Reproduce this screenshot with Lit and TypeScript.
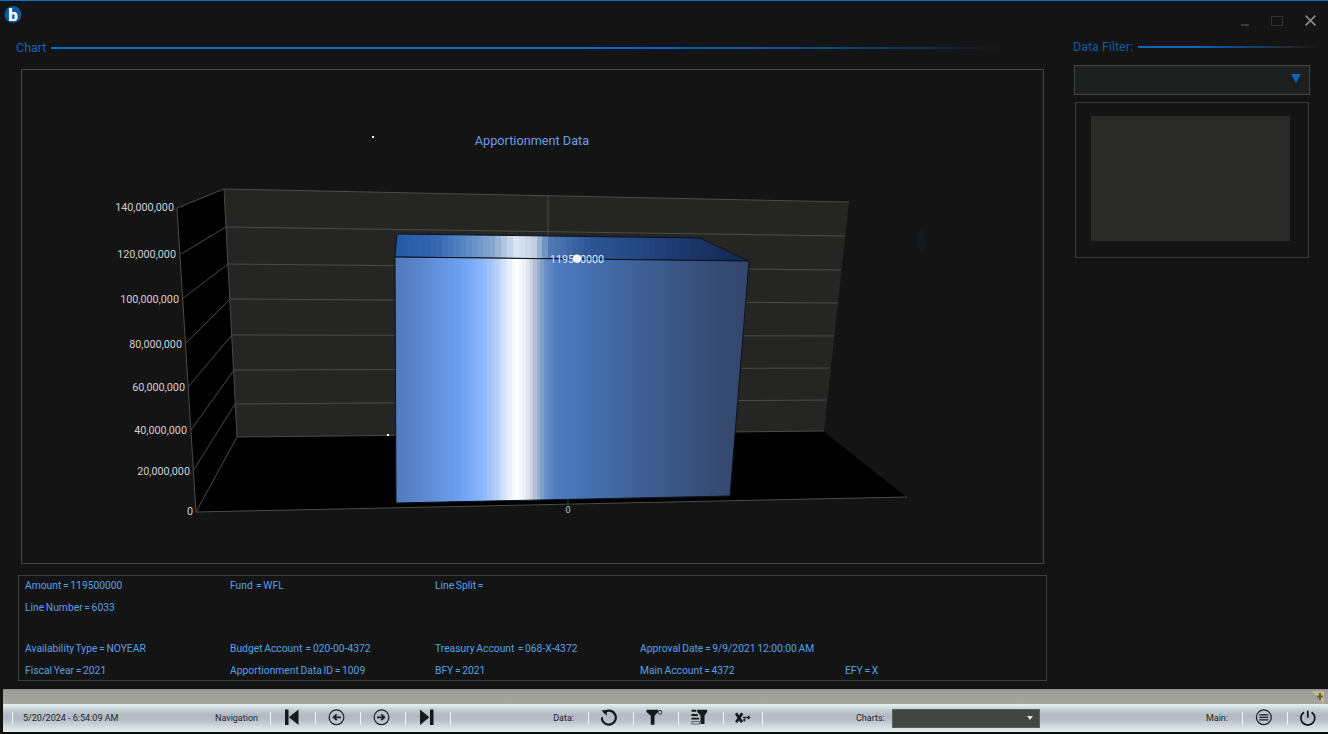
import { LitElement, css, html, svg } from 'lit'
import { customElement } from 'lit/decorators.js'

const info = [
	['Amount = 119500000', 'Fund  = WFL', 'Line Split =', '', ''],
	['Line Number = 6033', '', '', '', ''],
	['', '', '', '', ''],
	['Availability Type = NOYEAR', 'Budget Account  = 020-00-4372', 'Treasury Account  = 068-X-4372', 'Approval Date = 9/9/2021 12:00:00 AM', ''],
	['Fiscal Year = 2021', 'Apportionment Data ID = 1009', 'BFY = 2021', 'Main Account = 4372', 'EFY = X'],
]

// front edge of the left wall -> back edge, bottom up
const leftTicks = [
	[196, 512, 237, 437, '0', 193, 511],
	[193, 471, 235, 404, '20,000,000', 190, 471],
	[191, 430, 234, 370, '40,000,000', 187, 430],
	[188, 387, 232, 335, '60,000,000', 185, 387],
	[185, 344, 230, 299, '80,000,000', 182, 344],
	[182, 299, 228, 264, '100,000,000', 179, 299],
	[181, 254, 226, 227, '120,000,000', 176, 254],
	[177, 208, 224, 189, '140,000,000', 174, 207],
] as const

const wallEnds = [431, 400, 368, 336, 303, 270, 236, 202]
const wallRight = [824, 827, 830, 834, 838, 841, 845, 849]

type Stop = readonly [number, number, number, number]

const frontStops: Stop[] = [
	[0, 0x52, 0x79, 0xbd], [0.06, 0x5a, 0x84, 0xc8], [0.12, 0x63, 0x91, 0xdc], [0.2, 0x72, 0xa5, 0xf6],
	[0.25, 0x8d, 0xb8, 0xfb], [0.29, 0xb9, 0xd2, 0xf8], [0.32, 0xe6, 0xef, 0xfc], [0.345, 0xff, 0xff, 0xff],
	[0.37, 0xe9, 0xed, 0xf4], [0.395, 0xb4, 0xc0, 0xd6], [0.42, 0x6f, 0x95, 0xc8], [0.45, 0x4f, 0x7d, 0xc0],
	[0.55, 0x44, 0x70, 0xb0], [0.68, 0x3f, 0x62, 0x98], [0.8, 0x3a, 0x55, 0x85], [0.9, 0x36, 0x4a, 0x73],
	[1, 0x34, 0x46, 0x6c],
]

const topStops: Stop[] = [
	[0, 0x25, 0x58, 0xa4], [0.12, 0x35, 0x67, 0xb0], [0.2, 0x5b, 0x88, 0xc4], [0.28, 0x88, 0xa8, 0xd0],
	[0.34, 0xdb, 0xe5, 0xf2], [0.39, 0xc6, 0xd2, 0xe2], [0.44, 0x50, 0x79, 0xb4], [0.55, 0x2c, 0x55, 0x96],
	[0.7, 0x22, 0x46, 0x82], [0.85, 0x1a, 0x35, 0x68], [1, 0x12, 0x26, 0x50],
]

// the original chart shades the bar in flat vertical strips, so quantize the ramp
function bands(stops: Stop[], count: number) {
	const out: { o: number; c: string }[] = []
	for (let i = 0; i < count; i++) {
		const t = (i + 0.5) / count
		const k = stops.findIndex((s) => s[0] >= t)
		const a = stops[k - 1]
		const b = stops[k]
		const f = (t - a[0]) / (b[0] - a[0])
		const ch = (n: number) => Math.round(a[n] + (b[n] - a[n]) * f)
		const c = `rgb(${ch(1)},${ch(2)},${ch(3)})`
		out.push({ o: i / count, c }, { o: (i + 1) / count, c })
	}
	return out
}

@customElement('bar-chart')
export class BarChart extends LitElement {
	static styles = css`
		:host {
			display: block;
			width: 100%;
			height: 100%;
		}

		svg {
			display: block;
			width: 100%;
			height: 100%;
		}

		text {
			font-family: Roboto, 'Liberation Sans', sans-serif;
		}

		.title {
			font-size: 12.7px;
			fill: #6a9fe6;
			text-anchor: middle;
		}

		.axis {
			font-size: 10.8px;
			fill: #d2cdd2;
			text-anchor: end;
		}

		.xlabel {
			font-size: 9px;
			fill: #c8c8c8;
			text-anchor: middle;
		}

		.value {
			font-size: 10.7px;
			fill: #e2e8f0;
			text-anchor: middle;
		}

		.grid {
			stroke: #4b4b4a;
			stroke-width: 1;
			fill: none;
		}
	`

	render() {
		return html`
			<svg viewBox="22 70 1021 493">
				<defs>
					<linearGradient id="front" x1="0" x2="1" y1="0" y2="0">
						${bands(frontStops, 100).map((s) => svg`<stop offset=${s.o} stop-color=${s.c}></stop>`)}
					</linearGradient>
					<linearGradient id="top" x1="0" x2="1" y1="0" y2="0">
						${bands(topStops, 60).map((s) => svg`<stop offset=${s.o} stop-color=${s.c}></stop>`)}
					</linearGradient>
				</defs>

				<text class="title" x="532" y="145">Apportionment Data</text>
				<rect x="372" y="136" width="2" height="2" fill="#fff"></rect>
				<ellipse cx="921" cy="240" rx="5" ry="11" fill="#15181d"></ellipse>

				<polygon points="224,189 849,202 824,431 237,437" fill="#252524"></polygon>
				<polygon points="177,208 224,189 237,437 196,512" fill="#000"></polygon>
				<polygon points="237,437 824,431 907,497 196,512" fill="#000"></polygon>
				<line class="grid" x1="548" y1="196" x2="548" y2="236"></line>

				${leftTicks.map(
					([x1, y1, x2, y2, label, lx, ly], i) => svg`
						<line class="grid" x1=${x1} y1=${y1} x2=${x2} y2=${y2}></line>
						<line class="grid" x1=${x2} y1=${y2} x2=${wallRight[i]} y2=${wallEnds[i]}></line>
						<text class="axis" x=${lx} y=${ly + 4}>${label}</text>
					`,
				)}
				<line class="grid" x1="177" y1="208" x2="196" y2="512"></line>
				<line class="grid" x1="224" y1="189" x2="237" y2="437"></line>
				<line class="grid" x1="196" y1="512" x2="907" y2="497"></line>
				<line class="grid" x1="824" y1="431" x2="907" y2="497" stroke-opacity="0.2"></line>

				<rect x="387" y="434" width="2" height="2" fill="#fff"></rect>

				<polygon points="397,234 700,238 749,261 395,257" fill="url(#top)" stroke="#0c1220"></polygon>
				<polygon points="395,257 749,261 730,496 396,503" fill="url(#front)" stroke="#0c1220"></polygon>

				<line class="grid" x1="568" y1="500" x2="568" y2="504"></line>
				<text class="xlabel" x="568" y="513">0</text>
				<text class="value" x="577" y="263">119500000</text>
				<circle cx="577" cy="258.5" r="4" fill="#fff"></circle>
			</svg>
		`
	}
}

@customElement('app-root')
export class AppRoot extends LitElement {
	static styles = css`
		:host {
			display: block;
			width: 1328px;
			height: 734px;
			overflow: hidden;
		}

		.app {
			box-sizing: border-box;
			display: flex;
			flex-direction: column;
			width: 1328px;
			height: 734px;
			background: #141414;
			border-top: 1px solid #0a6cc8;
			font-family: Roboto, 'Liberation Sans', sans-serif;
		}

		.titlebar {
			display: flex;
			align-items: flex-start;
			height: 33px;
			flex: none;
		}

		.logo {
			width: 20px;
			height: 20px;
			margin: 4px 0 0 4px;
		}

		.logo text {
			font-family: Roboto, sans-serif;
			font-weight: 900;
			font-size: 17px;
			fill: #fff;
			text-anchor: middle;
		}

		.controls {
			margin-left: auto;
			display: flex;
			align-items: flex-start;
			gap: 22px;
			padding: 15px 12px 0 0;
		}

		.win-min {
			width: 8px;
			height: 2px;
			margin-top: 8px;
			background: #3a3a3a;
		}

		.win-max {
			width: 10px;
			height: 8px;
			border: 1px solid #343434;
		}

		.win-close {
			display: block;
			width: 11px;
			height: 11px;
			margin-top: -1px;
		}

		.content {
			flex: 1;
			display: flex;
			min-height: 0;
		}

		.left {
			width: 1060px;
			flex: none;
			display: flex;
			flex-direction: column;
			padding-left: 15px;
			box-sizing: border-box;
		}

		.right {
			flex: 1;
			display: flex;
			flex-direction: column;
			padding-left: 13px;
		}

		.head {
			display: flex;
			align-items: center;
			gap: 5px;
			font-size: 12.5px;
			height: 16px;
			color: #0e66bb;
		}

		.head-line {
			height: 2px;
			flex: none;
			margin-top: 2px;
		}

		.left .head {
			margin: 5px 0 0 1px;
		}

		.left .head-line {
			width: 960px;
			background: linear-gradient(90deg, #0c6cc6 0%, #0c6cc6 55%, #0a4c8a 80%, #141414 100%);
		}

		.right .head {
			margin-top: 4px;
			color: #0d5aa6;
		}

		.right .head-line {
			width: 176px;
			background: linear-gradient(90deg, #0b64b4 0%, #0b64b4 33%, #123f74 65%, #2a2a30 85%, #181818 100%);
		}

		.chart {
			box-sizing: border-box;
			width: 1023px;
			height: 495px;
			margin: 14px 0 0 6px;
			border: 1px solid #454545;
		}

		.info {
			box-sizing: border-box;
			width: 1029px;
			height: 106px;
			margin: 11px 0 0 3px;
			padding: 0 0 0 6px;
			border: 1px solid #3e3e3e;
			display: grid;
			grid-template-columns: repeat(5, 205px);
			grid-template-rows: 18px 26px 18px 21px 22px;
			align-items: center;
			font-size: 10.3px;
			word-spacing: -0.9px;
			color: #54a0e8;
			white-space: pre;
		}

		.combo {
			box-sizing: border-box;
			width: 236px;
			height: 30px;
			margin: 11px 0 0 1px;
			display: flex;
			align-items: center;
			justify-content: flex-end;
			padding-right: 8px;
			background: #1e201f;
			border: 1px solid #444;
		}

		.combo-arrow {
			width: 0;
			height: 0;
			margin-bottom: 3px;
			border-left: 5px solid transparent;
			border-right: 5px solid transparent;
			border-top: 9px solid #0a64b8;
		}

		.listbox {
			box-sizing: border-box;
			width: 234px;
			height: 156px;
			margin: 7px 0 0 2px;
			padding: 13px 18px 16px 15px;
			border: 1px solid #3e3e3e;
		}

		.listbox-inner {
			width: 199px;
			height: 125px;
			background: #2a2a29;
		}

		.footer {
			flex: none;
			margin-left: 3px;
			height: 45px;
			display: flex;
			flex-direction: column;
		}

		.grip-band {
			height: 15px;
			display: flex;
			justify-content: flex-end;
			background: linear-gradient(180deg, #8b908f 0, #9c9e97 2px, #a5a69f 100%);
		}

		.grip {
			display: block;
			width: 12px;
			height: 13px;
			margin: 2px 4px 0 0;
		}

		.toolbar {
			height: 28px;
			display: flex;
			align-items: center;
			padding-left: 9px;
			color: #23262b;
			font-size: 9px;
			background: linear-gradient(180deg, #e6f3f2 0, #c9d2d6 5px, #b3b9c4 11px, #b8bec8 16px, #d4dde0 23px, #e4eeee 100%);
			border-bottom: 2px solid #0a0a0a;
			box-sizing: content-box;
		}

		.cell {
			box-sizing: border-box;
			height: 13px;
			display: flex;
			align-items: center;
			border-left: 1px solid #f2f6f6;
		}

		.date {
			width: 258px;
			padding: 0 12px 0 10px;
			justify-content: space-between;
		}

		.data {
			width: 138px;
			justify-content: flex-end;
			padding-right: 14px;
		}

		.btn {
			width: 45px;
			justify-content: center;
		}

		.btn-last {
			width: 39px;
			justify-content: center;
		}

		.charts {
			width: 480px;
			padding-right: 14px;
			gap: 7px;
		}

		.charts-label {
			margin-left: 93px;
		}

		.main-label {
			margin-left: auto;
		}

		.select {
			box-sizing: border-box;
			width: 148px;
			height: 19px;
			flex: none;
			display: flex;
			align-items: center;
			justify-content: flex-end;
			padding-right: 6px;
			background: #434542;
			border: 1px solid #5b5f5c;
		}

		.select-arrow {
			width: 0;
			height: 0;
			border-left: 3.5px solid transparent;
			border-right: 3.5px solid transparent;
			border-top: 4px solid #d8e8e0;
		}

		.icon {
			display: block;
			width: 20px;
			height: 20px;
			flex: none;
			margin: -4px 0;
		}

		.power {
			margin-left: 10px;
		}
	`

	private icon(body: unknown) {
		return html`<svg class="icon" viewBox="0 0 20 20">${body}</svg>`
	}

	render() {
		return html`
			<div class="app">
				<div class="titlebar">
					<svg class="logo" viewBox="0 0 20 20">
						<circle cx="9" cy="9.500" r="8.500" fill="#0b5a98"></circle>
						<text x="9" y="15.500">b</text>
					</svg>
					<div class="controls">
						<div class="win-min"></div>
						<div class="win-max"></div>
						<svg class="win-close" viewBox="0 0 11 11">
							<path d="M.6.6l9.800 9.800M10.400.6L.6 10.400" stroke="#8c8c8c" stroke-width="1.600" fill="none"></path>
						</svg>
					</div>
				</div>
				<div class="content">
					<div class="left">
						<div class="head"><span>Chart</span><div class="head-line"></div></div>
						<div class="chart"><bar-chart></bar-chart></div>
						<div class="info">
							${info.flat().map((t) => html`<div>${t}</div>`)}
						</div>
					</div>
					<div class="right">
						<div class="head"><span>Data Filter:</span><div class="head-line"></div></div>
						<div class="combo"><div class="combo-arrow"></div></div>
						<div class="listbox"><div class="listbox-inner"></div></div>
					</div>
				</div>
				<div class="footer">
					<div class="grip-band">
						<svg class="grip" viewBox="0 0 12 13">
							<path d="M0 0H12V13Z" fill="#c9b98c"></path>
							<path d="M8 2v7M5 5.500h6" stroke="#6b5f3a" stroke-width="2" fill="none"></path>
						</svg>
					</div>
					<div class="toolbar">
						<div class="cell date"><span>5/20/2024 - 6:54:09 AM</span><span>Navigation</span></div>
						<div class="cell btn">
							${this.icon(svg`<path d="M2 1.500h3.500v15.500H2zM6 9.200L15.500 1.500v15.500z" fill="#15181c"></path>`)}
						</div>
						<div class="cell btn">
							${this.icon(svg`<circle cx="8.500" cy="9.300" r="7.400" fill="none" stroke="#1a1d22" stroke-width="1.200"></circle>
								<path d="M13 9.300H6M8.700 6.400L5.700 9.300l3 2.900" fill="none" stroke="#1a1d22" stroke-width="1.800"></path>`)}
						</div>
						<div class="cell btn">
							${this.icon(svg`<circle cx="8.500" cy="9.300" r="7.400" fill="none" stroke="#1a1d22" stroke-width="1.200"></circle>
								<path d="M4 9.300h7M8.300 6.400l3 2.900-3 2.900" fill="none" stroke="#1a1d22" stroke-width="1.800"></path>`)}
						</div>
						<div class="cell btn">
							${this.icon(svg`<path d="M12 1.500h3.500v15.500H12zM11.300 9.200L2 1.500v15.500z" fill="#15181c"></path>`)}
						</div>
						<div class="cell data"><span>Data:</span></div>
						<div class="cell btn">
							${this.icon(svg`<path d="M2.800 4.700A7 7 0 1 1 .8 9.300" fill="none" stroke="#15181c" stroke-width="2.200"></path>
								<path d="M.3 2.300h5.500v5.500z" fill="#15181c"></path>`)}
						</div>
						<div class="cell btn">
							${this.icon(svg`<path d="M.5 1.700H12v2.200L8.500 7.700v9H4.800v-9L.5 3.900z" fill="#15181c"></path>
								<circle cx="14" cy="4.300" r="1.900" fill="none" stroke="#2a2d33" stroke-width="1"></circle>`)}
						</div>
						<div class="cell btn">
							${this.icon(svg`<path d="M6.200 1.700h10v2.200l-2.700 3.600V16h-4V7.500L6.200 3.900z" fill="#15181c"></path>
								<path d="M.5 1.700h4.800v2h-4.800zM.5 6h6.200v2h-6.200zM.5 9.800h7.500v1.800H.5z" fill="#15181c"></path>
								<rect x="1" y="13.500" width="7.500" height="2.500" fill="none" stroke="#4a4e55" stroke-width="0.800"></rect>`)}
						</div>
						<div class="cell btn-last">
							${this.icon(svg`<path d="M3 5.300l6 9M9.200 5.300l-6 9" stroke="#15181c" stroke-width="2.800" fill="none"></path>
								<path d="M10 9.500h7" stroke="#15181c" stroke-width="1.200"></path>
								<path d="M14.800 7.300l2.800 2.200-2.800 2.200zM12.200 10l-2.500 2 2.500 2z" fill="#15181c"></path>`)}
						</div>
						<div class="cell charts">
							<span class="charts-label">Charts:</span>
							<div class="select"><div class="select-arrow"></div></div>
							<span class="main-label">Main:</span>
						</div>
						<div class="cell btn">
							${this.icon(svg`<circle cx="8.800" cy="9.300" r="7.400" fill="none" stroke="#1a1d22" stroke-width="1.200"></circle>
								<path d="M4.300 6.800h9M4.300 9.300h9M4.300 11.800h9" stroke="#1a1d22" stroke-width="1.300"></path>`)}
						</div>
						<div class="cell power-cell">
							<svg class="icon power" viewBox="0 0 20 20">
								<path d="M6 4.200a7 7 0 1 0 7.600 0" fill="none" stroke="#111" stroke-width="1.700"></path>
								<path d="M9.800 2.700v7" stroke="#111" stroke-width="1.700"></path>
							</svg>
						</div>
					</div>
				</div>
			</div>
		`
	}
}
